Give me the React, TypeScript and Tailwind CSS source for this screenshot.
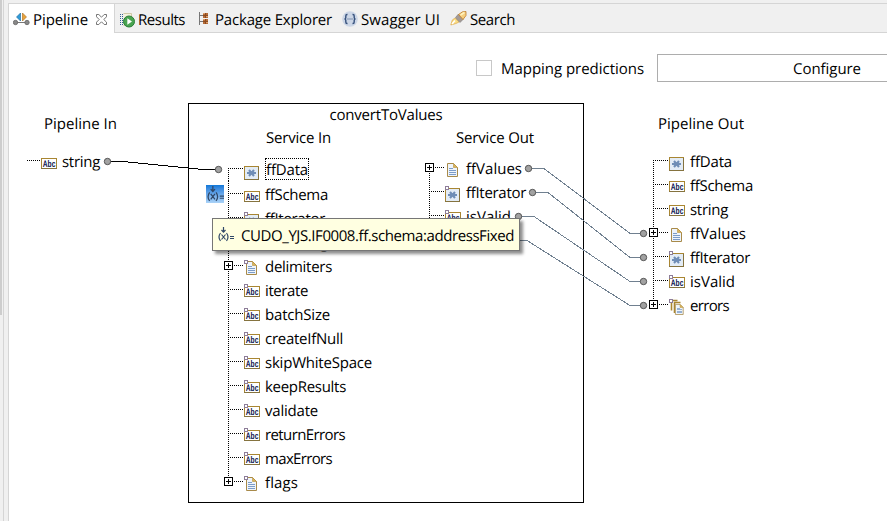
import { useLayoutEffect, useRef } from 'react';

type IconKind = 'abc' | 'star' | 'doc' | 'docs';

/** Single-line text whose tracking is adjusted so that it fills a known width. */
function Label({ text, w, className = '' }: { text: string; w: number; className?: string }) {
  const ref = useRef<HTMLSpanElement>(null);
  useLayoutEffect(() => {
    const el = ref.current;
    if (!el) return;
    el.style.letterSpacing = '0px';
    const natural = el.getBoundingClientRect().width;
    el.style.letterSpacing = `${(w - natural) / text.length}px`;
  }, [text, w]);
  return (
    <span ref={ref} className={`block h-6 w-fit shrink-0 leading-[26px] whitespace-pre ${className}`}>
      {text}
    </span>
  );
}

function Page({ x, y }: { x: number; y: number }) {
  return (
    <g transform={`translate(${x} ${y})`}>
      <path d="M0.5 0.5h6l4 4v9h-10z" fill="#eef4fb" stroke="#a88a4a" />
      <path d="M6.5 0.5v4h4z" fill="#d9b45c" stroke="#b8923c" strokeWidth="0.6" />
      <path d="M2 5.5h4M2 7.5h7M2 9.5h7M2 11.5h7" stroke="#7c9cc8" shapeRendering="crispEdges" />
    </g>
  );
}

function TypeIcon({ kind, optional }: { kind: IconKind; optional?: boolean }) {
  return (
    <svg width="16" height="17" viewBox="0 0 16 17" className="block shrink-0 overflow-visible">
      {kind === 'abc' && (
        <g>
          <rect x="0.5" y="2.5" width="15" height="10" fill="#fff" stroke="#a98632" />
          <path d="M0 12.5h16" stroke="#85733f" />
          <text x="1.800" y="11.300" textLength="12.600" lengthAdjust="spacingAndGlyphs" fontSize="9.500" fontWeight="700" fill="#0a1450" fontFamily="'Liberation Sans', sans-serif">Abc</text>
        </g>
      )}
      {kind === 'star' && (
        <g>
          <rect x="0.5" y="2.5" width="14" height="13" fill="#e3ecf6" stroke="#a98632" />
          <path d="M0 15.5h15M14.5 3v13" stroke="#85733f" />
          <path d="M3 9h9M5 6l5 6M10 6l-5 6" stroke="#6f8db6" strokeWidth="2.100" />
        </g>
      )}
      {kind === 'doc' && <Page x={2} y={1} />}
      {kind === 'docs' && (
        <g>
          <path d="M2.5 11.5v-10h6M5.5 14v-10.500h6" fill="none" stroke="#a98632" strokeWidth="1.6" />
          <g transform="translate(6 5) scale(.78)"><Page x={0} y={0} /></g>
        </g>
      )}
      {optional && <rect x="0.5" y="0.5" width="3" height="3" fill="#fff" stroke="#8d7d98" />}
    </svg>
  );
}

function Gutter({ first, last, plus, h = 24 }: { first?: boolean; last?: boolean; plus?: boolean; h?: number }) {
  return (
    <svg width="20" height={h} viewBox={`0 0 20 ${h}`} className="block shrink-0" shapeRendering="crispEdges">
      <path d={`M4.500 ${first ? 12 : 0}V${last ? 13 : h}`} stroke="#000" strokeDasharray="1 1" />
      <path d="M4 12.5H19" stroke="#000" strokeDasharray="1 1" />
      {plus && (
        <g>
          <rect x="0.5" y="8.500" width="8" height="8" fill="#fff" stroke="#000" />
          <path d="M2 12.5h5M4.500 10v5" stroke="#000" />
        </g>
      )}
    </svg>
  );
}

interface RowData {
  text: string;
  w: number;
  kind: IconKind;
  optional?: boolean;
  plus?: boolean;
  low?: boolean;
  focus?: boolean;
}

function Tree({ rows }: { rows: RowData[] }) {
  return (
    <div className="flex flex-col">
      {rows.map((r, i) => (
        <div key={r.text} className={`flex items-start ${r.focus ? 'h-[25px]' : 'h-6'}`}>
          <Gutter first={i === 0} last={i === rows.length - 1} plus={r.plus} h={r.focus ? 25 : 24} />
          <div className={r.low ? 'pt-2' : 'pt-[7px]'}>
            <TypeIcon kind={r.kind} optional={r.optional} />
          </div>
          {r.focus ? (
            <div className="mt-[2px] ml-[5px] flex h-[22px] w-11 border border-dotted border-black">
              <Label text={r.text} w={r.w} className="-mt-0.5" />
            </div>
          ) : (
            <Label text={r.text} w={r.w} className="mt-px ml-[5px]" />
          )}
        </div>
      ))}
    </div>
  );
}

const serviceIn: RowData[] = [
  { text: 'ffData', w: 42, kind: 'star', low: true, focus: true },
  { text: 'ffSchema', w: 63, kind: 'abc', low: true },
  { text: 'ffIterator', w: 60, kind: 'star', optional: true },
  { text: 'encoding', w: 63, kind: 'abc', optional: true },
  { text: 'delimiters', w: 67, kind: 'doc', optional: true, plus: true },
  { text: 'iterate', w: 43, kind: 'abc', optional: true },
  { text: 'batchSize', w: 65, kind: 'abc', optional: true },
  { text: 'createIfNull', w: 78, kind: 'abc', optional: true },
  { text: 'skipWhiteSpace', w: 107, kind: 'abc', optional: true },
  { text: 'keepResults', w: 81, kind: 'abc', optional: true },
  { text: 'validate', w: 53, kind: 'abc', optional: true },
  { text: 'returnErrors', w: 80, kind: 'abc', optional: true },
  { text: 'maxErrors', w: 67, kind: 'abc', optional: true },
  { text: 'flags', w: 33, kind: 'doc', optional: true, plus: true },
];

const serviceOut: RowData[] = [
  { text: 'ffValues', w: 56, kind: 'doc', plus: true },
  { text: 'ffIterator', w: 60, kind: 'star', optional: true },
  { text: 'isValid', w: 45, kind: 'abc', optional: true },
  { text: 'errors', w: 39, kind: 'docs', optional: true, plus: true },
];

const pipelineOut: RowData[] = [
  { text: 'ffData', w: 42, kind: 'star' },
  { text: 'ffSchema', w: 63, kind: 'abc' },
  { text: 'string', w: 38, kind: 'abc' },
  { text: 'ffValues', w: 56, kind: 'doc', plus: true },
  { text: 'ffIterator', w: 60, kind: 'star', optional: true },
  { text: 'isValid', w: 45, kind: 'abc', optional: true },
  { text: 'errors', w: 39, kind: 'docs', optional: true, plus: true },
];

const dots: [number, number][] = [
  [107.5, 161.5], [218.5, 169.5],
  [528.5, 168.5], [532.5, 192.5], [518.5, 216.5],
  [643.5, 233.5], [643.5, 257.5], [643.5, 281.5], [643.5, 305.5],
];

function Wires() {
  return (
    <svg width="887" height="488" viewBox="0 33 887 488" className="pointer-events-none absolute top-0 -left-[9px]">
      <g fill="none" shapeRendering="crispEdges">
        <path d="M108 161.500H123L203 169.500H218" stroke="#000" />
        <path d="M529 168.500H544L630 233.500H643M533 192.500H548L630 257.500H643M519 216.500H534L630 281.500H643M512 240.500H527L630 305.500H643" stroke="#708090" />
      </g>
      {dots.map(([x, y]) => (
        <circle key={`${x}-${y}`} cx={x} cy={y} r="3.200" fill="#a2a2a2" stroke="#555" />
      ))}
    </svg>
  );
}

function SetValue({ size }: { size: number }) {
  return (
    <svg width={size} height={size} viewBox="0 0 16 16" className="block" fill="none" stroke="#304868">
      <path d="M5.500 0v5M3.500 3l2 2.200l2-2.200" strokeWidth="1.200" />
      <path d="M2.500 6q-3 4 0 8M8.500 6q3 4 0 8M3.500 7.500l4 5M7.500 7.500l-4 5" strokeWidth="1.200" />
      <path d="M12 9.500h4M12 11.500h4" />
    </svg>
  );
}

function PipelineIcon() {
  return (
    <svg width="17" height="14" viewBox="0 0 17 14" className="block shrink-0">
      <path d="M3 9.500h11" stroke="#777" fill="none" />
      <path d="M7.500 0v8L3.500 4z" fill="#2f9bd8" stroke="#17639a" strokeWidth=".6" />
      <path d="M9.500 0v8l4-4z" fill="#e8a33c" stroke="#a96b17" strokeWidth=".6" />
      <circle cx="2.500" cy="9.500" r="2.200" fill="#888" stroke="#666" strokeWidth=".8" />
      <circle cx="14" cy="9.500" r="2.200" fill="#888" stroke="#666" strokeWidth=".8" />
    </svg>
  );
}

function CloseIcon() {
  return (
    <svg width="11" height="11" viewBox="0 0 11 11" className="block shrink-0">
      <path d="M.5.5h2.300l2.700 2.700L8.200.5h2.300v2.300L7.800 5.500l2.700 2.700v2.300H8.200L5.500 7.800l-2.700 2.700H.5V8.200l2.700-2.700L.5 2.800z" fill="#fff" stroke="#666" strokeWidth=".9" />
    </svg>
  );
}

function ResultsIcon() {
  return (
    <svg width="15" height="15" viewBox="0 0 15 15" className="block shrink-0">
      <path d="M.5 1v11M2.500 1v11" stroke="#345f91" strokeDasharray="1 1" />
      <path d="M3.500.5h8v12h-8" fill="#f5f2df" stroke="#cfc9a8" />
      <circle cx="9" cy="8.500" r="5.500" fill="#49a451" stroke="#2a7f38" />
      <path d="M7.300 5.300v6.400l4.700-3.200z" fill="#fff" />
    </svg>
  );
}

function PackageIcon() {
  return (
    <svg width="11" height="13" viewBox="0 0 11 13" className="block shrink-0" shapeRendering="crispEdges">
      <path d="M1.500 0v13M1 3.500h4M1 9.500h4" stroke="#777" fill="none" />
      <rect x="5" y="1" width="5" height="5" fill="#b66b36" />
      <rect x="5" y="7" width="5" height="5" fill="#b66b36" />
      <path d="M7.500 1v5M7.500 7v5M5 3.500h5M5 9.500h5" stroke="#8a4a20" />
      <path d="M5 1.500h2M5 7.500h2M8 4.500h2M8 10.500h2" stroke="#dba06c" />
    </svg>
  );
}

function SwaggerIcon() {
  return (
    <svg width="16" height="16" viewBox="0 0 16 16" className="block shrink-0" fill="none" stroke="#36517c">
      <circle cx="8" cy="8" r="7.800" fill="#ccd6e6" stroke="none" />
      <path d="M5.500 3.500H5q-1.200 0-1.200 1.500v1.500Q3.800 8 2.500 8q1.300 0 1.300 1.500V11q0 1.500 1.200 1.500h.5M10.500 3.500h.5q1.200 0 1.200 1.500v1.500q0 1.500 1.300 1.500q-1.300 0-1.300 1.500V11q0 1.500-1.200 1.500h-.5" strokeWidth="1.400" />
      <path d="M5.500 8h1M7.500 8h1M9.500 8h1" strokeWidth="1.200" />
    </svg>
  );
}

function SearchIcon() {
  return (
    <svg width="17" height="16" viewBox="0 0 17 16" className="block shrink-0">
      <path d="M.8 14l1.500-5L5 7l4 4-3 1.500z" fill="#f8dc83" stroke="#e0a94a" strokeWidth=".7" />
      <path d="M2 13l3-3.500" stroke="#fff" strokeWidth="1.500" />
      <path d="M5.500 6.500l3-3.500 5 5-3.500 3.500z" fill="#a59a94" stroke="#777" strokeWidth=".6" />
      <path d="M8.500 3.500l4-2.700 3.500-.3v4l-3 4z" fill="#f6cf80" stroke="#bf7b27" strokeWidth=".8" />
      <path d="M10.500 4l4-2.500" stroke="#fff2bd" strokeWidth="1.500" />
    </svg>
  );
}

export default function App() {
  return (
    <div className="flex h-[521px] w-[887px] overflow-hidden bg-[#f0f0f0] font-['Open_Sans','Noto_Sans',sans-serif] text-[15px] leading-6 text-black [text-rendering:geometricPrecision]">
      <div className="flex w-2 shrink-0">
        <div className="h-[315px] w-0.5 bg-[#cdcdcd]" />
        <div className="ml-px w-px bg-[#d5d5d5]" />
      </div>
      <div className="flex min-w-0 flex-1 flex-col pt-[3px]">
        <div className="flex h-[30px] shrink-0 border-t border-l border-[#d5d5d5]">
          <div className="flex w-[106px] shrink-0 items-start border-r border-[#d5d5d5] bg-white pt-[3px] pl-1">
            <div className="pt-1.5"><PipelineIcon /></div>
            <Label text="Pipeline" w={55} className="ml-[3px]" />
            <div className="pt-[7px] pl-[8px]"><CloseIcon /></div>
          </div>
          <div className="flex flex-1 items-start border-b border-[#d5d5d5] pt-[3px] pl-[5px]">
            <div className="pt-1.5"><ResultsIcon /></div>
            <Label text="Results" w={47} className="ml-[3px]" />
            <div className="pt-[5px] pl-[13px]"><PackageIcon /></div>
            <Label text="Package Explorer" w={117} className="ml-[6px]" />
            <div className="pt-1 pl-[10px]"><SwaggerIcon /></div>
            <Label text="Swagger UI" w={79} className="ml-[3px]" />
            <div className="pt-1 pl-[10px]"><SearchIcon /></div>
            <Label text="Search" w={45} className="ml-[3px]" />
          </div>
        </div>

        <div className="relative flex flex-1 flex-col border-l border-[#d5d5d5] bg-white">
          <div className="flex h-[70px] shrink-0 items-start pt-[21px] pl-[467px]">
            <div className="mt-1.5 size-4 border border-[#c8c8c8]" />
            <Label text="Mapping predictions" w={143} className="mt-0.5 ml-[9px]" />
            <div className="ml-[13px] flex h-7 w-[230px] shrink-0 border border-r-0 border-[#adadad] pl-[135px]">
              <Label text="Configure" w={68} className="mt-px" />
            </div>
          </div>

          <div className="flex items-start">
            <section className="w-[179px] shrink-0 pt-2">
              <Label text="Pipeline In" w={73} className="ml-[35px]" />
              <div className="mt-[14px] flex h-6 items-start pl-[18px]">
                <svg width="14" height="24" shapeRendering="crispEdges" className="block shrink-0">
                  <path d="M0 11.500H13" stroke="#000" strokeDasharray="1 1" />
                </svg>
                <div className="pt-[7px]"><TypeIcon kind="abc" /></div>
                <Label text="string" w={38} className="ml-[5px]" />
              </div>
            </section>

            <section className="h-[400px] w-[396px] shrink-0 border border-black">
              <div className="flex h-[23px] justify-center">
                <Label text="convertToValues" w={113} className="-mt-0.5" />
              </div>
              <div className="flex items-start">
                <div className="w-[236px] shrink-0 pl-[35px]">
                  <Label text="Service In" w={65} className="-mt-0.5 ml-[42px]" />
                  <div className="mt-[7px]"><Tree rows={serviceIn} /></div>
                </div>
                <div className="pl-[31px]">
                  <Label text="Service Out" w={78} className="-mt-0.5" />
                  <div className="mt-[6px] -ml-[31px]"><Tree rows={serviceOut} /></div>
                </div>
              </div>
            </section>

            <section className="pt-2 pl-[65px]">
              <Label text="Pipeline Out" w={86} className="ml-[9px]" />
              <div className="mt-[13px]"><Tree rows={pipelineOut} /></div>
            </section>
          </div>

          <Wires />

          <div className="absolute top-[152px] left-[197px] flex size-[18px] items-center justify-center bg-linear-to-b from-[#0c78d8] to-[#a9d2f7]">
            <SetValue size={17} />
          </div>
          <div className="absolute top-[185px] left-[203px] flex h-[33px] w-[308px] items-start border border-[#767676] bg-[#ffffe1] pt-1 pl-[5px] shadow-[3px_3px_3px_rgba(0,0,0,0.45)]">
            <div className="pt-1"><SetValue size={16} /></div>
            <Label text="CUDO_YJS.IF0008.ff.schema:addressFixed" w={273} className="ml-[7px]" />
          </div>
        </div>
      </div>
    </div>
  );
}
